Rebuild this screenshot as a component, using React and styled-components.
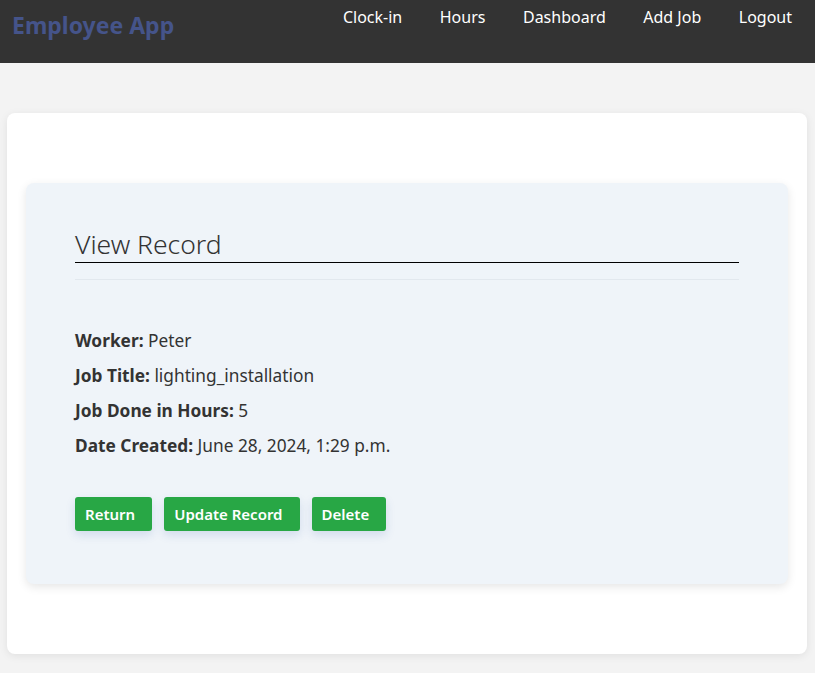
import React from "react";
import styled, { createGlobalStyle } from "styled-components";

const GlobalStyle = createGlobalStyle`
  * { box-sizing: border-box; }
  body {
    margin: 0;
    background: #f3f3f3;
    font-family: "Noto Sans", "Open Sans", sans-serif;
    color: #333;
  }
`;

export default function App() {
  const record = [
    { label: "Worker:", value: "Peter" },
    { label: "Job Title:", value: "lighting_installation" },
    { label: "Job Done in Hours:", value: "5" },
    { label: "Date Created:", value: "June 28, 2024, 1:29 p.m." },
  ];

  return (
    <>
      <GlobalStyle />
      <NavBar>
        <Brand>Employee App</Brand>
        <NavLinks>
          <NavLink>Clock-in</NavLink>
          <NavLink>Hours</NavLink>
          <NavLink>Dashboard</NavLink>
          <NavLink>Add Job</NavLink>
          <NavLink>Logout</NavLink>
        </NavLinks>
      </NavBar>
      <Main>
        <Card>
          <Panel>
            <Heading>View Record</Heading>
            <Divider />
            <Details>
              {record.map((r) => (
                <Row key={r.label}>
                  <Label>{r.label}</Label> {r.value}
                </Row>
              ))}
            </Details>
            <Actions>
              <Button>Return</Button>
              <Button>Update Record</Button>
              <Button>Delete</Button>
            </Actions>
          </Panel>
        </Card>
      </Main>
    </>
  );
}

const NavBar = styled.nav`
  height: 63px;
  background: #333333;
  display: flex;
  justify-content: space-between;
  align-items: flex-start;
  padding: 0 23px 0 12px;
`;
const Brand = styled.div`
  font-size: 23px;
  font-weight: 700;
  color: #45548a;
  line-height: 50px;
`;
const NavLinks = styled.div`
  display: flex;
  gap: 37.5px;
`;
const NavLink = styled.a`
  color: #fff;
  font-size: 16px;
  line-height: 34px;
  cursor: pointer;
`;
const Main = styled.main`
  padding: 50px 8px 19px 7px;
`;
const Card = styled.div`
  background: #fff;
  border-radius: 8px;
  box-shadow: 0 2px 8px rgba(0, 0, 0, 0.08);
  padding: 70px 19px 70px 19px;
`;
const Panel = styled.div`
  background: #eff4f9;
  border-radius: 8px;
  box-shadow: 0 3px 10px rgba(0, 0, 0, 0.1);
  padding: 44px 49px 53px 49px;
`;
const Heading = styled.h2`
  margin: 0;
  font-size: 26.5px;
  font-weight: 300;
  color: #333;
  line-height: 34px;
  padding-bottom: 1px;
  border-bottom: 1px solid #000;
`;
const Divider = styled.hr`
  border: 0;
  border-top: 1px solid #e2e8ee;
  margin: 16px 0 0;
`;
const Details = styled.div`
  padding-top: 49px;
  display: flex;
  flex-direction: column;
  gap: 11px;
`;
const Row = styled.p`
  margin: 0;
  font-size: 17.3px;
  line-height: 24px;
`;
const Label = styled.strong`
  font-weight: 700;
`;
const Actions = styled.div`
  display: flex;
  gap: 12px;
  margin-top: 39px;
`;
const Button = styled.button`
  background: #28a745;
  color: #fff;
  border: none;
  border-radius: 3px;
  height: 34px;
  padding: 0 17px 0 10px;
  font-family: inherit;
  font-size: 15px;
  font-weight: 600;
  box-shadow: 0 4px 10px rgba(40, 80, 160, 0.15);
  cursor: pointer;
`;
